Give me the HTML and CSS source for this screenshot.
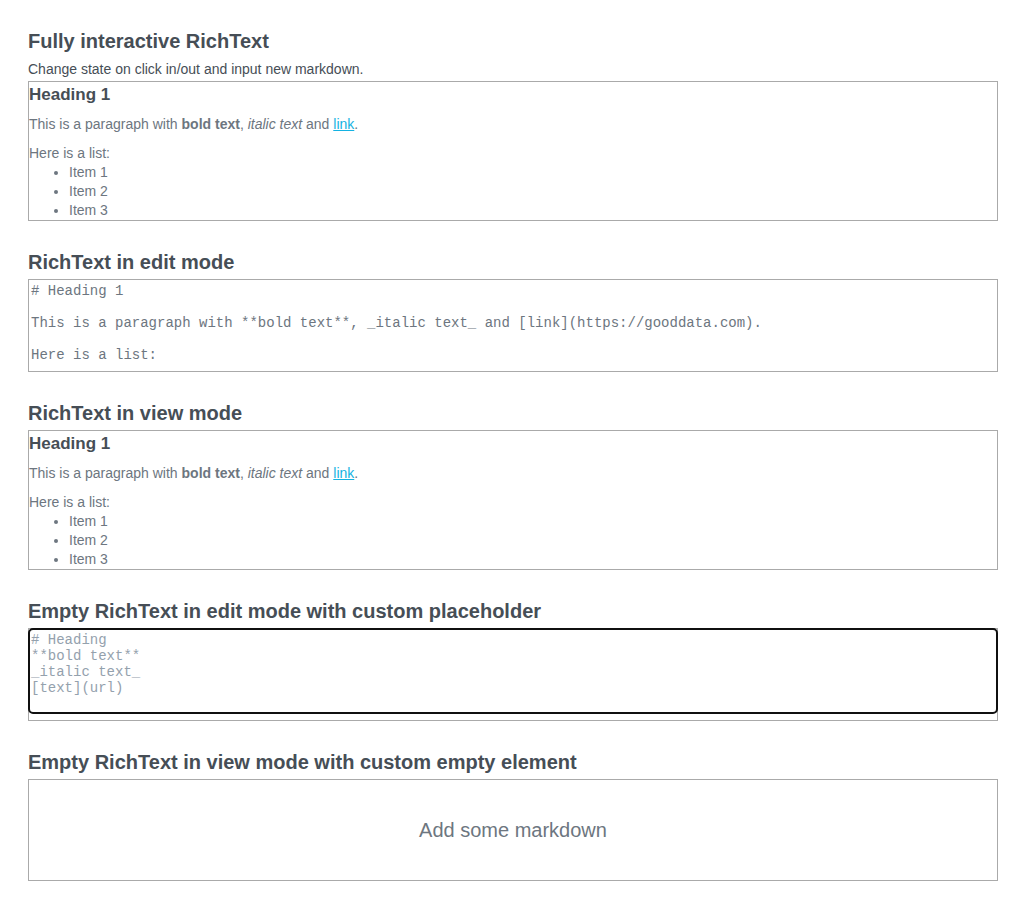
FILE: index.html
```html
<!DOCTYPE html>
<html>
<head>
<meta charset="utf-8">
<link rel="stylesheet" href="styles.css">
</head>
<body>
<div class="page">
  <section class="story">
    <h2 class="story-title">Fully interactive RichText</h2>
    <p class="story-desc">Change state on click in/out and input new markdown.</p>
    <div class="rich-text view">
      <h1>Heading 1</h1>
      <p>This is a paragraph with <strong>bold text</strong>, <em>italic text</em> and <a href="#">link</a>.</p>
      <p>Here is a list:</p>
      <ul>
        <li>Item 1</li>
        <li>Item 2</li>
        <li>Item 3</li>
      </ul>
    </div>
  </section>

  <section class="story">
    <h2 class="story-title">RichText in edit mode</h2>
    <div class="rich-text edit">
      <textarea class="editor"># Heading 1

This is a paragraph with **bold text**, _italic text_ and [link](https://gooddata.com).

Here is a list:

- Item 1
- Item 2
- Item 3</textarea>
    </div>
  </section>

  <section class="story">
    <h2 class="story-title">RichText in view mode</h2>
    <div class="rich-text view">
      <h1>Heading 1</h1>
      <p>This is a paragraph with <strong>bold text</strong>, <em>italic text</em> and <a href="#">link</a>.</p>
      <p>Here is a list:</p>
      <ul>
        <li>Item 1</li>
        <li>Item 2</li>
        <li>Item 3</li>
      </ul>
    </div>
  </section>

  <section class="story">
    <h2 class="story-title">Empty RichText in edit mode with custom placeholder</h2>
    <div class="rich-text edit">
      <textarea class="editor focused" placeholder="# Heading
**bold text**
_italic text_
[text](url)"></textarea>
    </div>
  </section>

  <section class="story">
    <h2 class="story-title">Empty RichText in view mode with custom empty element</h2>
    <div class="rich-text empty">
      <span class="empty-text">Add some markdown</span>
    </div>
  </section>
</div>
</body>
</html>
```

FILE: styles.css
```css
html, body {
  margin: 0;
  padding: 0;
  background: #fff;
}

body {
  font-family: "Liberation Sans", Arial, sans-serif;
  color: #464e56;
}

.page {
  padding: 28px 0 0 28px;
  width: 970px;
}

.story {
  margin-bottom: 28px;
}

.story-title {
  margin: 0 0 3px;
  font-size: 20px;
  line-height: 27px;
  font-weight: 700;
  color: #464e56;
}

.story-desc {
  margin: 5px 0 2px;
  font-size: 14px;
  line-height: 19px;
  color: #464e56;
}

.rich-text {
  border: 1px solid #aaa;
  box-sizing: border-box;
}

.view {
  font-size: 14px;
  line-height: 19px;
  color: #6d7680;
}

.view h1 {
  margin: 0 0 -1px;
  padding-top: 1px;
  font-size: 17px;
  line-height: 23px;
  font-weight: 700;
  color: #464e56;
}

.view p {
  margin: 10px 0 0;
}

.view strong {
  font-weight: 700;
}

.view em {
  font-style: italic;
}

.view a {
  color: #14b2e2;
  text-decoration: underline;
}

.view ul {
  margin: 0;
  padding-left: 40px;
}

.edit {
  height: 93px;
  display: flex;
  flex-direction: column;
}

.editor {
  display: block;
  box-sizing: border-box;
  width: 100%;
  height: 91px;
  margin: 0;
  padding: 3px 2px 2px;
  border: none;
  resize: none;
  overflow: hidden;
  font-family: "Liberation Mono", "Courier New", monospace;
  font-size: 14px;
  line-height: 16px;
  color: #6d7680;
  background: transparent;
  outline: none;
}

.editor.focused {
  height: 84px;
  border-radius: 4px;
  outline: 2px solid #101010;
  outline-offset: -1px;
}

.editor::placeholder {
  color: #94a1ad;
  opacity: 1;
}

.empty {
  height: 102px;
  display: flex;
  align-items: center;
  justify-content: center;
}

.empty-text {
  font-size: 20px;
  line-height: 23px;
  color: #6d7680;
}
```
